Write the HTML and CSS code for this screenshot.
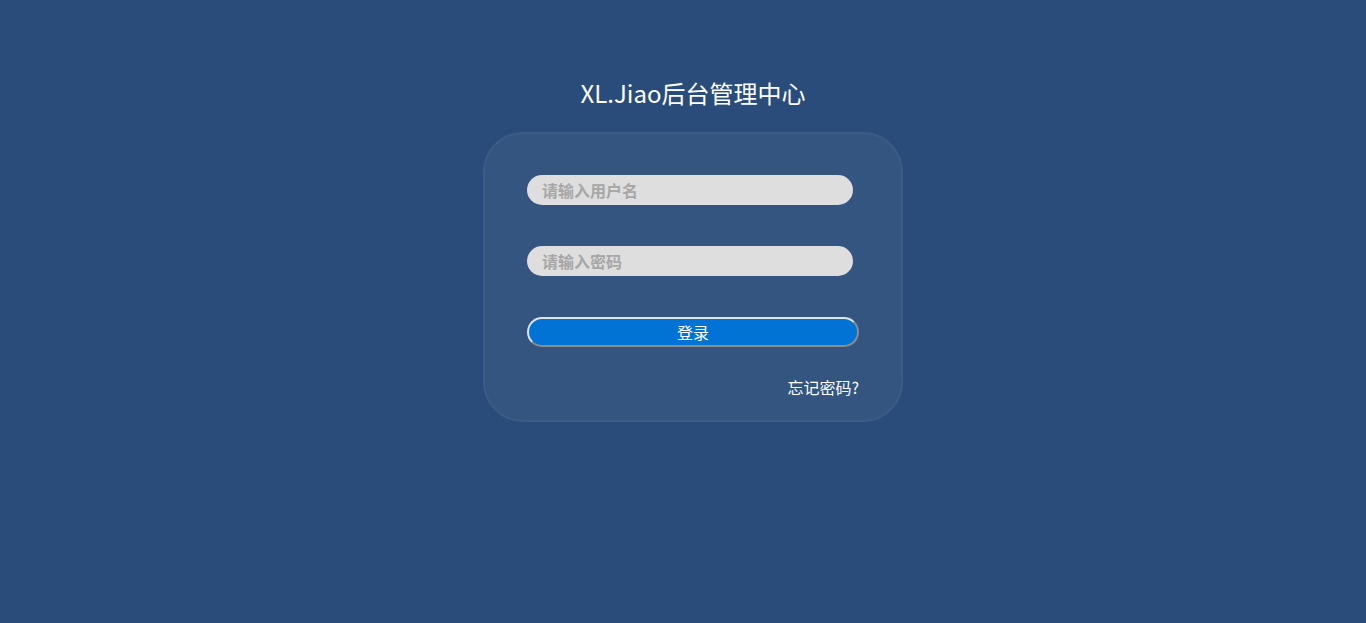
FILE: index.html
```
<!DOCTYPE html>
<html lang="zh-CN">
<head>
    <meta charset="UTF-8">
    <title>XL.Jiao后台管理中心</title>
    <link rel="stylesheet" href="styles.css">
</head>
<body>
    <h1 class="title">XL.Jiao后台管理中心</h1>
    <div class="login-box">
        <form id="loginForm">
            <input type="text" class="field" placeholder="请输入用户名">
            <input type="password" class="field" placeholder="请输入密码">
            <button type="submit" class="login-btn">登录</button>
        </form>
        <div class="forget"><a href="#">忘记密码?</a></div>
    </div>
</body>
</html>
```

FILE: styles.css
```
html, body {
    height: 100%;
}
body {
    margin: 0;
    padding-left: 20px;
    background-color: #2a4c7a;
    font-family: "Noto Sans CJK SC", sans-serif;
    display: flex;
    flex-direction: column;
    align-items: center;
}
.title {
    margin: 76px 0 0;
    height: 56px;
    line-height: 34px;
    font-size: 24px;
    font-weight: normal;
    color: #fff;
}
.login-box {
    box-sizing: border-box;
    width: 420px;
    height: 290px;
    padding: 41px 43px 0 42px;
    background-color: #33557f;
    border: 2px solid #3a5c87;
    border-radius: 40px;
}
#loginForm {
    display: flex;
    flex-direction: column;
}
.field {
    box-sizing: border-box;
    width: 326px;
    height: 30px;
    margin-bottom: 41px;
    padding: 0 15px;
    border: none;
    border-radius: 15px;
    background-color: #dedede;
    font-family: "Noto Sans CJK SC", sans-serif;
    font-size: 16px;
    outline: none;
}
.field::placeholder {
    color: #a6a6a6;
    font-weight: bold;
}
.login-btn {
    box-sizing: border-box;
    width: 332px;
    height: 30px;
    border: 2px solid #e2e2e2;
    border-right-color: #8c8c8c;
    border-bottom-color: #8c8c8c;
    border-radius: 15px;
    background-color: #0073d4;
    color: #fff;
    font-family: "Noto Sans CJK SC", sans-serif;
    font-size: 16px;
    cursor: pointer;
}
.forget {
    width: 332px;
    margin-top: 28px;
    text-align: right;
    font-size: 16px;
}
.forget a {
    color: #fff;
    text-decoration: none;
}
```
